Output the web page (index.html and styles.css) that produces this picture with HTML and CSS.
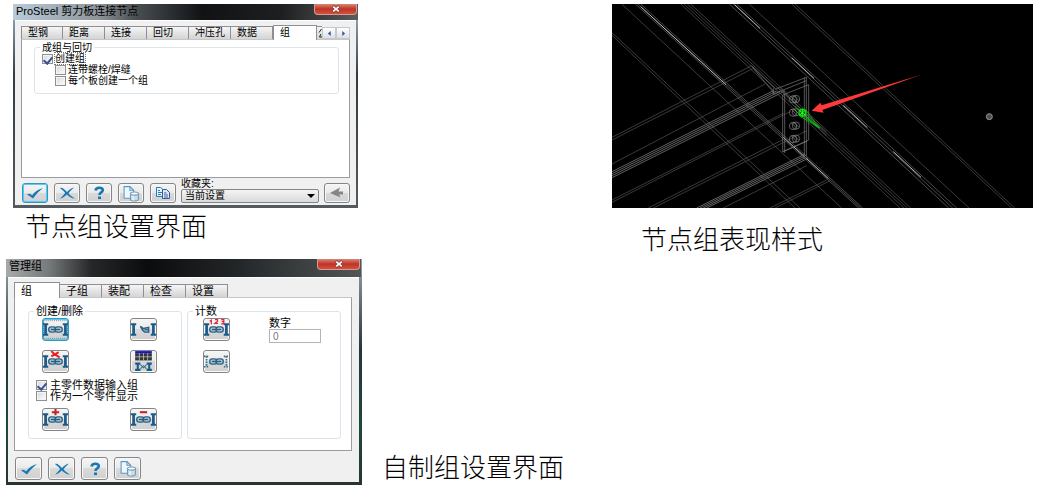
FILE: index.html
```html
<!DOCTYPE html>
<html lang="zh-CN">
<head>
<meta charset="utf-8">
<meta name="viewport" content="width=device-width, initial-scale=1">
<title>ProSteel 节点组</title>
<link rel="stylesheet" href="styles.css">
</head>
<body>
<svg class="sprite" aria-hidden="true">
  <symbol id="check" viewBox="0 0 18 14"><path d="M1 8.500C3 7 5 8 6 9.500C9 5.500 12 3.500 17 2C13 5 9.500 9 7 12.500C5 11.500 3.500 9.500 1 8.500Z" fill="#1878b4"/></symbol>
  <symbol id="cross" viewBox="0 0 18 14"><path d="M2 2C4 1 6 3 9 6C11 4 13 2 16 1.500C14 3.500 12 5 10.500 7.200C12 9 14 11 17 12.500C13.500 12.500 11 10.500 8.800 8.500C7 10 5 12 2 12.500C4 11 5.500 9 7.200 7C5.500 5 4 3.500 2 2Z" fill="#1878b4"/></symbol>
  <symbol id="help" viewBox="0 0 18 14"><path d="M5.500 4.500C6 .800 13 .800 12.800 4.200C12.700 6.500 9.600 6.200 9.400 9" fill="none" stroke="#1878b4" stroke-width="2.600"/><rect x="8" y="10.500" width="3" height="2.600" fill="#1878b4"/></symbol>
  <symbol id="page" viewBox="1 0 16 16"><path d="M2.500 1.500H8L11.500 5V12.500H2.500Z" fill="#eef7fd" stroke="#5b97c5"/><path d="M8 1.500V5H11.500" fill="none" stroke="#5b97c5"/><path d="M8.500 8V13.800C9 15.500 15.500 15.500 16 13.800V8Z" fill="#c7dcea" stroke="#7299b5"/><ellipse cx="12.250" cy="8" rx="3.750" ry="1.500" fill="#fff" stroke="#7299b5"/><path d="M11 10V14.500" stroke="#fff"/></symbol>
  <symbol id="copy" viewBox="0 0 18 14"><path d="M2.500 1.500H6.500L9.500 4V10.500H2.500Z" fill="#e5f3fb" stroke="#247caf"/><path d="M4 4.500H6M4 6.500H8M4 8.500H7" stroke="#247caf"/><path d="M8.500 3.500H12.500L15.500 6.500V12.500H8.500Z" fill="#dceaf5" stroke="#315c98"/><path d="M10 7H12.500M10 9H14M10 11H14" stroke="#59539f"/></symbol>
  <symbol id="back" viewBox="0 0 18 14"><path d="M2 7L12 1.500L10.500 5.500H15V8.500H11L12.500 11.500Z" fill="#858585"/></symbol>
  <symbol id="beams" viewBox="0 0 24 20"><path d="M0 5H5M0 15H5M19 5H24M19 15H24" stroke="#1b5b8a" stroke-width="2"/><path d="M2.500 5V15M21.500 5V15" stroke="#1b5b8a" stroke-width="2.600"/></symbol>
  <symbol id="links" viewBox="0 0 24 20"><rect x="5.500" y="7.500" width="7" height="5" rx="2.500" fill="#b8d0dc" stroke="#285f80" stroke-width="1.300"/><rect x="11.500" y="7.500" width="7" height="5" rx="2.500" fill="#b8d0dc" stroke="#285f80" stroke-width="1.300"/><path d="M7.500 10H16.500" stroke="#285f80" stroke-width="1.500"/></symbol>
</svg>

<main class="page">
  <div class="column">
    <figure class="figure-top">
      <section class="dialog" aria-label="ProSteel 剪力板连接节点">
        <header class="titlebar"><h2 class="title">ProSteel 剪力板连接节点</h2><button class="close" type="button" aria-label="关闭"><svg viewBox="0 0 12 10"><path d="M2 1.500L10 8.500M10 1.500L2 8.500" stroke="#7d3935" stroke-width="3.600"/><path d="M2.500 2L9.500 8M9.500 2L2.500 8" stroke="#fff" stroke-width="2.200"/></svg></button></header>
        <div class="client">
          <div class="tabs" role="tablist">
            <button class="tab" role="tab">型钢</button><button class="tab" role="tab">距离</button><button class="tab" role="tab">连接</button><button class="tab" role="tab">回切</button><button class="tab" role="tab">冲压孔</button><button class="tab" role="tab">数据</button><button class="tab selected" role="tab" aria-selected="true">组</button><button class="tab clipped" role="tab" aria-label="下一项"><svg viewBox="0 0 4 10"><path d="M3.500 1L1 4.500M3 6L1.500 9H4" fill="none" stroke="#222"/></svg></button>
            <button class="scroll" aria-label="向左"><svg viewBox="0 0 6 6"><path d="M4.500 0V6L1 3Z" fill="#3858a0"/></svg></button><button class="scroll" aria-label="向右"><svg viewBox="0 0 6 6"><path d="M1.500 0V6L5 3Z" fill="#3858a0"/></svg></button>
          </div>
          <div class="panel panel-single" role="tabpanel">
            <fieldset class="group">
              <legend>成组与回切</legend>
              <label class="option"><input type="checkbox" checked><span class="focused">创建组</span></label>
              <label class="option nested"><input type="checkbox"><span>连带螺栓/焊缝</span></label>
              <label class="option nested"><input type="checkbox"><span>每个板创建一个组</span></label>
            </fieldset>
          </div>
          <footer class="actions">
            <button class="tool active" aria-label="确定"><svg><use href="#check"/></svg></button>
            <button class="tool" aria-label="取消"><svg><use href="#cross"/></svg></button>
            <button class="tool" aria-label="帮助"><svg><use href="#help"/></svg></button>
            <button class="tool" aria-label="模板"><svg class="large"><use href="#page"/></svg></button>
            <button class="tool" aria-label="复制"><svg><use href="#copy"/></svg></button>
            <div class="favorites"><label for="favorite">收藏夹:</label><div class="select-wrap"><select id="favorite"><option>当前设置</option></select></div></div>
            <button class="tool" aria-label="返回"><svg><use href="#back"/></svg></button>
          </footer>
        </div>
      </section>
      <figcaption class="caption caption-node">节点组设置界面</figcaption>
    </figure>

    <figure class="figure-bottom">
      <section class="dialog manager" aria-label="管理组">
        <header class="titlebar"><h2 class="title">管理组</h2><button class="close" type="button" aria-label="关闭"><svg viewBox="0 0 12 10"><path d="M2 1.500L10 8.500M10 1.500L2 8.500" stroke="#7d3935" stroke-width="3.600"/><path d="M2.500 2L9.500 8M9.500 2L2.500 8" stroke="#fff" stroke-width="2.200"/></svg></button></header>
        <div class="client">
          <div class="tabs" role="tablist"><button class="tab selected" role="tab" aria-selected="true">组</button><button class="tab" role="tab">子组</button><button class="tab" role="tab">装配</button><button class="tab" role="tab">检查</button><button class="tab" role="tab">设置</button></div>
          <div class="panel panel-double" role="tabpanel">
            <fieldset class="group">
              <legend>创建/删除</legend>
              <div class="icon-grid">
                <button class="tool active" aria-label="创建组"><svg viewBox="0 0 24 20"><use href="#beams"/><use href="#links"/><rect x=".5" y="1.500" width="23" height="17" fill="none" stroke="#555" stroke-width=".6" stroke-dasharray="1 1"/></svg></button>
                <button class="tool" aria-label="拆分组"><svg viewBox="0 0 24 20"><use href="#beams"/><path d="M9 7L12 9L17 8V12.500H13L11 10.500Z" fill="#8db1c4" stroke="#285f80" stroke-width="1.300"/><path d="M13 10.200H17" stroke="#285f80"/></svg></button>
                <button class="tool" aria-label="删除组"><svg viewBox="0 0 24 20"><use href="#beams"/><use href="#links"/><path d="M8 0L11 3L16 6M15 1L12 3L8 5" fill="none" stroke="#ef2020" stroke-width="2"/></svg></button>
                <button class="tool" aria-label="组列表"><svg viewBox="0 0 24 20"><path d="M4 1H20" stroke="#1111e8" stroke-width="2"/><rect x="4" y="2" width="16" height="7" fill="#333"/><path d="M4 5.500H20M8 2V9M12 2V9M16 2V9" stroke="#bbb" stroke-width=".8"/><path d="M4 12H9M4 18H9M15 12H20M15 18H20M6.500 12V18M17.500 12V18" stroke="#1b5b8a" stroke-width="2"/><path d="M9 13L12 16L15 13M9 17L12 14L15 17" stroke="#3b7290" fill="none"/></svg></button>
              </div>
              <div class="options">
                <label class="option"><input type="checkbox" checked><span>主零件数据输入组</span></label>
                <label class="option"><input type="checkbox"><span>作为一个零件显示</span></label>
              </div>
              <div class="icon-grid">
                <button class="tool" aria-label="添加"><svg viewBox="0 0 24 20"><use href="#beams"/><use href="#links"/><path d="M8.500 3H15.500M12 0V6" stroke="#c9202c" stroke-width="2"/></svg></button>
                <button class="tool" aria-label="移除"><svg viewBox="0 0 24 20"><use href="#beams"/><use href="#links"/><path d="M8.500 3H15.500" stroke="#c9202c" stroke-width="2"/></svg></button>
              </div>
            </fieldset>
            <fieldset class="group counting">
              <legend>计数</legend>
              <div class="count-tools">
                <button class="tool" aria-label="编号"><svg viewBox="0 0 24 20"><use href="#beams"/><use href="#links"/><path d="M5.500 2L7 1V5M10.500 .500H13V2L10.500 4H13.500M16.500 .500H19V4.500H16.500M17 2.500H19" fill="none" stroke="#e02735" stroke-width="1.200"/></svg></button>
                <button class="tool" aria-label="清除编号"><svg viewBox="0 0 24 20"><path d="M0 5H5M0 15H5M2.500 5V15M19 5H24M19 15H24M21.500 5V15" stroke="#386b8c" stroke-width="1.600" stroke-dasharray="1.500 1"/><use href="#links"/></svg></button>
              </div>
              <div class="number"><label for="count">数字</label><input id="count" type="text" value="0" disabled></div>
            </fieldset>
          </div>
          <footer class="actions">
            <button class="tool" aria-label="确定"><svg><use href="#check"/></svg></button>
            <button class="tool" aria-label="取消"><svg><use href="#cross"/></svg></button>
            <button class="tool" aria-label="帮助"><svg><use href="#help"/></svg></button>
            <button class="tool" aria-label="模板"><svg class="large"><use href="#page"/></svg></button>
          </footer>
        </div>
      </section>
      <figcaption class="caption caption-manager">自制组设置界面</figcaption>
    </figure>
  </div>

  <figure class="model">
    <svg class="viewport" viewBox="6 12 1263 612" role="img" aria-label="节点组线框模型">
      <defs><linearGradient id="tail"><stop offset="0" stop-color="#ff3939"/><stop offset=".85" stop-color="#ff3939"/><stop offset="1" stop-color="#801010"/></linearGradient></defs>
      <rect x="6" y="12" width="1263" height="612" fill="#000"/>
      <g fill="none" stroke="#585858" stroke-width="2">
        <path d="M6 98L570 624M6 106L555 624M35 12L695 624M212 12L870 624M222 12L882 624M232 12L892 624M242 12L902 624M418 12L1077 624M545 12L1205 624M555 12L1214 624"/>
        <path stroke="#707070" d="M76 12L746 624M92 12L758 624M84 12L752 624M358 12L1016 624M370 12L1028 624M380 12L1040 624"/>
        <path stroke="#b8b8b8" stroke-width="3" d="M92 20L270 183M265 178L348 254M520 412L655 536M374 14L450 85M545 173L612 235M700 316L772 383M850 455L933 532"/>
        <path d="M425 197L6 412M432 204L6 420M465 252L6 492M520 340L6 600M540 335L6 607M520 418L115 624M590 392L130 624M590 497L340 624M650 540L480 624M660 542L495 624"/>
        <path stroke="#626262" stroke-width="3" d="M490 272L6 515M500 273L6 521M510 274L6 527M525 273L6 533M585 462L260 624M588 466L270 624M590 471L280 624M594 475L290 624"/>
        <path stroke="#808080" d="M425 197L495 265M430 205L495 283M490 265V283M495 268L589 232M500 278L589 242M518 285V455L590 424M524 281V459M583 232V466M589 232V468M596 254V420L520 455M518 285L596 254"/>
        <path stroke="#656565" d="M500 260L650 396M512 265L650 406"/>
        <g id="bolt" stroke="#8a8a8a"><circle cx="549" cy="298" r="11"/><circle cx="558" cy="297" r="11"/><path d="M544 288L562 307M551 286L567 302"/></g>
        <use href="#bolt" y="40"/><use href="#bolt" y="80"/><use href="#bolt" y="119"/>
      </g>
      <g fill="none" stroke="#08d908" stroke-width="2"><path d="M554 317L628 384L587 329M568 347L628 384M578 347L628 384M585 347L628 384"/><circle cx="577" cy="338" r="10" fill="#075d07" stroke-width="4"/><path stroke="#22ff22" stroke-width="3" d="M568 331L587 346M568 346L587 330M577 326V350"/></g>
      <path d="M605 332L631 308L635 316L940 222L637 330L641 338Z" fill="url(#tail)"/>
      <circle cx="1138" cy="350" r="9" fill="#505050" stroke="#929292" stroke-width="3"/>
    </svg>
    <figcaption class="caption caption-model">节点组表现样式</figcaption>
  </figure>
</main>
</body>
</html>
```
FILE: styles.css
```css
* { box-sizing: border-box; }

body {
  margin: 0;
  background: #fff;
  color: #000;
  font-family: "Liberation Sans", "Noto Sans CJK SC", sans-serif;
}

figure { margin: 0; }
button, input, select { font: inherit; color: inherit; margin: 0; }
button { padding: 0; }
.sprite { position: absolute; width: 0; height: 0; }

.page {
  display: grid;
  grid-template-columns: minmax(0, 606fr) minmax(0, 421fr);
  align-items: start;
  padding: 4px 31px 16px 6px;
}

.column { display: flex; flex-direction: column; gap: 17px; }
.figure-top { padding-left: 7px; }
.figure-bottom { display: flex; align-items: flex-end; gap: 20px; }

.caption {
  font-family: "Noto Sans CJK SC", sans-serif;
  font-size: 26px;
  font-weight: 300;
  line-height: 34px;
  white-space: nowrap;
}
.caption-node { padding-left: 12px; }
.caption-model { padding: 13px 0 0 29px; }
.caption-manager { padding-bottom: 2px; }

.viewport { display: block; width: 100%; }

/* Dialog frame */
.dialog {
  width: 345px;
  padding: 0 2px 3px;
  background: linear-gradient(#a4b8c8, #333b40 35%, #555a5e);
  font-size: 10px;
  line-height: 11px;
}
.manager {
  flex: none;
  width: 356px;
  padding: 0 3px 3px 2px;
  background: linear-gradient(#9ba5a8, #26363b 40%, #1d493d 75%, #283532);
  font-size: 11px;
  line-height: 12px;
}
.titlebar {
  display: flex;
  justify-content: space-between;
  align-items: flex-start;
  height: 16px;
  margin: 0 -2px;
  padding-left: 3px;
  background: linear-gradient(90deg, #b9cbd9, #8d9499 25%, #4c5154 35%, #101214 55%, #1d1f21 78%, #5a5c5e);
}
.manager .titlebar {
  height: 18px;
  background: linear-gradient(90deg, #a7aaab, #777a7b 12%, #252728 24%, #0b0c0d 40%, #232628 65%, #525657);
}
.title {
  margin: 0;
  font-size: 11px;
  font-weight: 400;
  line-height: 14px;
}
.close {
  display: grid;
  place-items: center;
  width: 43px;
  height: 11px;
  margin-right: 1px;
  border: 1px solid #d59b92;
  border-top: 0;
  border-radius: 0 0 4px 4px;
  background: linear-gradient(#d9877b, #bf3324 50%, #d4513c);
}
.close svg { width: 10px; height: 8px; }

.client {
  padding: 5px 6px 2px;
  border-top: 1px solid #fff;
  background: #f0f0f0;
}
.manager .client { padding: 4px 7px 2px 6px; }

/* Tabs */
.tabs { display: flex; align-items: flex-end; height: 13px; }
.manager .tabs { height: 15px; }
.tab {
  flex: none;
  width: 42px;
  height: 13px;
  padding-left: 6px;
  border: 1px solid #8e8f94;
  border-width: 1px 1px 0 0;
  background: linear-gradient(#f6f6f6, #e4e4e4 50%, #d4d4d4);
  text-align: left;
  line-height: 12px;
  white-space: nowrap;
}
.tab:first-child { border-left-width: 1px; }
.tab.selected {
  position: relative;
  width: 44px;
  height: 15px;
  margin-bottom: -1px;
  border-left-width: 1px;
  background: #fff;
}
.manager .tab.selected { width: 46px; height: 16px; }
.tab.clipped {
  display: flex;
  justify-content: flex-end;
  flex: 1;
  width: 0;
  min-width: 0;
  padding: 1px 0 0;
  border-right-width: 0;
}
.clipped svg { width: 4px; height: 10px; }
.scroll {
  display: grid;
  place-items: center;
  width: 14px;
  height: 12px;
  border: 1px solid #c4c8cf;
  background: linear-gradient(#fff, #dcdfe4);
}
.scroll svg { width: 5px; height: 5px; }

.panel {
  border: 1px solid #9a9ba3;
  border-top-color: #c5c6ca;
  background: #fff;
}
.panel-single { min-height: 139px; padding: 2px 10px 0 12px; }
.panel-double {
  display: grid;
  grid-template-columns: 1fr 1fr;
  gap: 5px;
  min-height: 154px;
  padding: 7px 10px 11px 13px;
}

.group {
  min-width: 0;
  margin: 0;
  padding: 0 7px 7px;
  border: 1px solid #dde5ea;
  border-radius: 3px;
}
.group legend { margin-left: -2px; padding: 0 2px; }

.option {
  display: flex;
  align-items: center;
  gap: 2px;
  width: max-content;
  height: 11px;
}
.nested { margin-left: 13px; }
.focused { outline: 1px dotted #777; }
.option input {
  appearance: none;
  display: grid;
  place-items: center;
  width: 11px;
  height: 10px;
  border: 1px solid #8e8f8f;
  background: linear-gradient(135deg, #d3d7da, #fff);
  box-shadow: inset 0 0 0 1px #f4f4f4;
}
.option input:checked::before {
  content: "";
  width: 4px;
  height: 7px;
  border: solid #3b509b;
  border-width: 0 2px 2px 0;
  transform: rotate(40deg);
}
.manager .option { gap: 3px; }

/* Tool buttons */
.tool {
  display: grid;
  place-items: center;
  flex: none;
  width: 26px;
  height: 20px;
  border: 1px solid #858585;
  border-radius: 3px;
  background: linear-gradient(#f5f5f5, #eaeaea 48%, #dadada 50%, #d0d0d0);
  box-shadow: inset 0 0 0 1px #f8f8f8;
}
.manager .tool { width: 27px; height: 23px; }
.tool.active {
  border-color: #3397c5;
  box-shadow: inset 0 0 0 1px #57ccef;
}
.tool svg { display: block; width: 18px; height: 14px; }
.tool .large { width: 18px; height: 17px; }
.group .tool svg { width: 25px; height: 21px; }

.icon-grid {
  display: grid;
  grid-template-columns: 27px 27px;
  column-gap: 61px;
  row-gap: 9px;
  padding: 1px 0 0 6px;
}
.options { padding: 6px 0; }

.counting { display: flex; flex-wrap: wrap; align-content: flex-start; gap: 39px; }
.count-tools { display: grid; gap: 9px; padding: 1px 0 0 8px; }
.number { display: grid; align-content: start; }
.number input {
  width: 52px;
  height: 14px;
  padding: 0 3px;
  border: 1px solid #b4b4b4;
  background: #fff;
  color: #777;
  font-size: 10px;
}

.actions { display: flex; align-items: flex-end; gap: 6px; padding: 0 0 0 1px; }
.manager .actions { padding-top: 6px; }
.favorites { flex: 1; min-width: 0; margin: 0 -1px; }
.favorites label { display: block; }
.select-wrap { position: relative; }
.select-wrap::after {
  content: "";
  position: absolute;
  right: 4px;
  top: 5px;
  border: 4px solid transparent;
  border-top-color: #000;
  border-bottom: 0;
  pointer-events: none;
}
.favorites select {
  appearance: none;
  display: block;
  width: 100%;
  height: 14px;
  padding: 0 3px;
  border: 1px solid #858585;
  border-radius: 2px;
  background: linear-gradient(#f4f4f4, #dadada);
  line-height: 12px;
}
```
